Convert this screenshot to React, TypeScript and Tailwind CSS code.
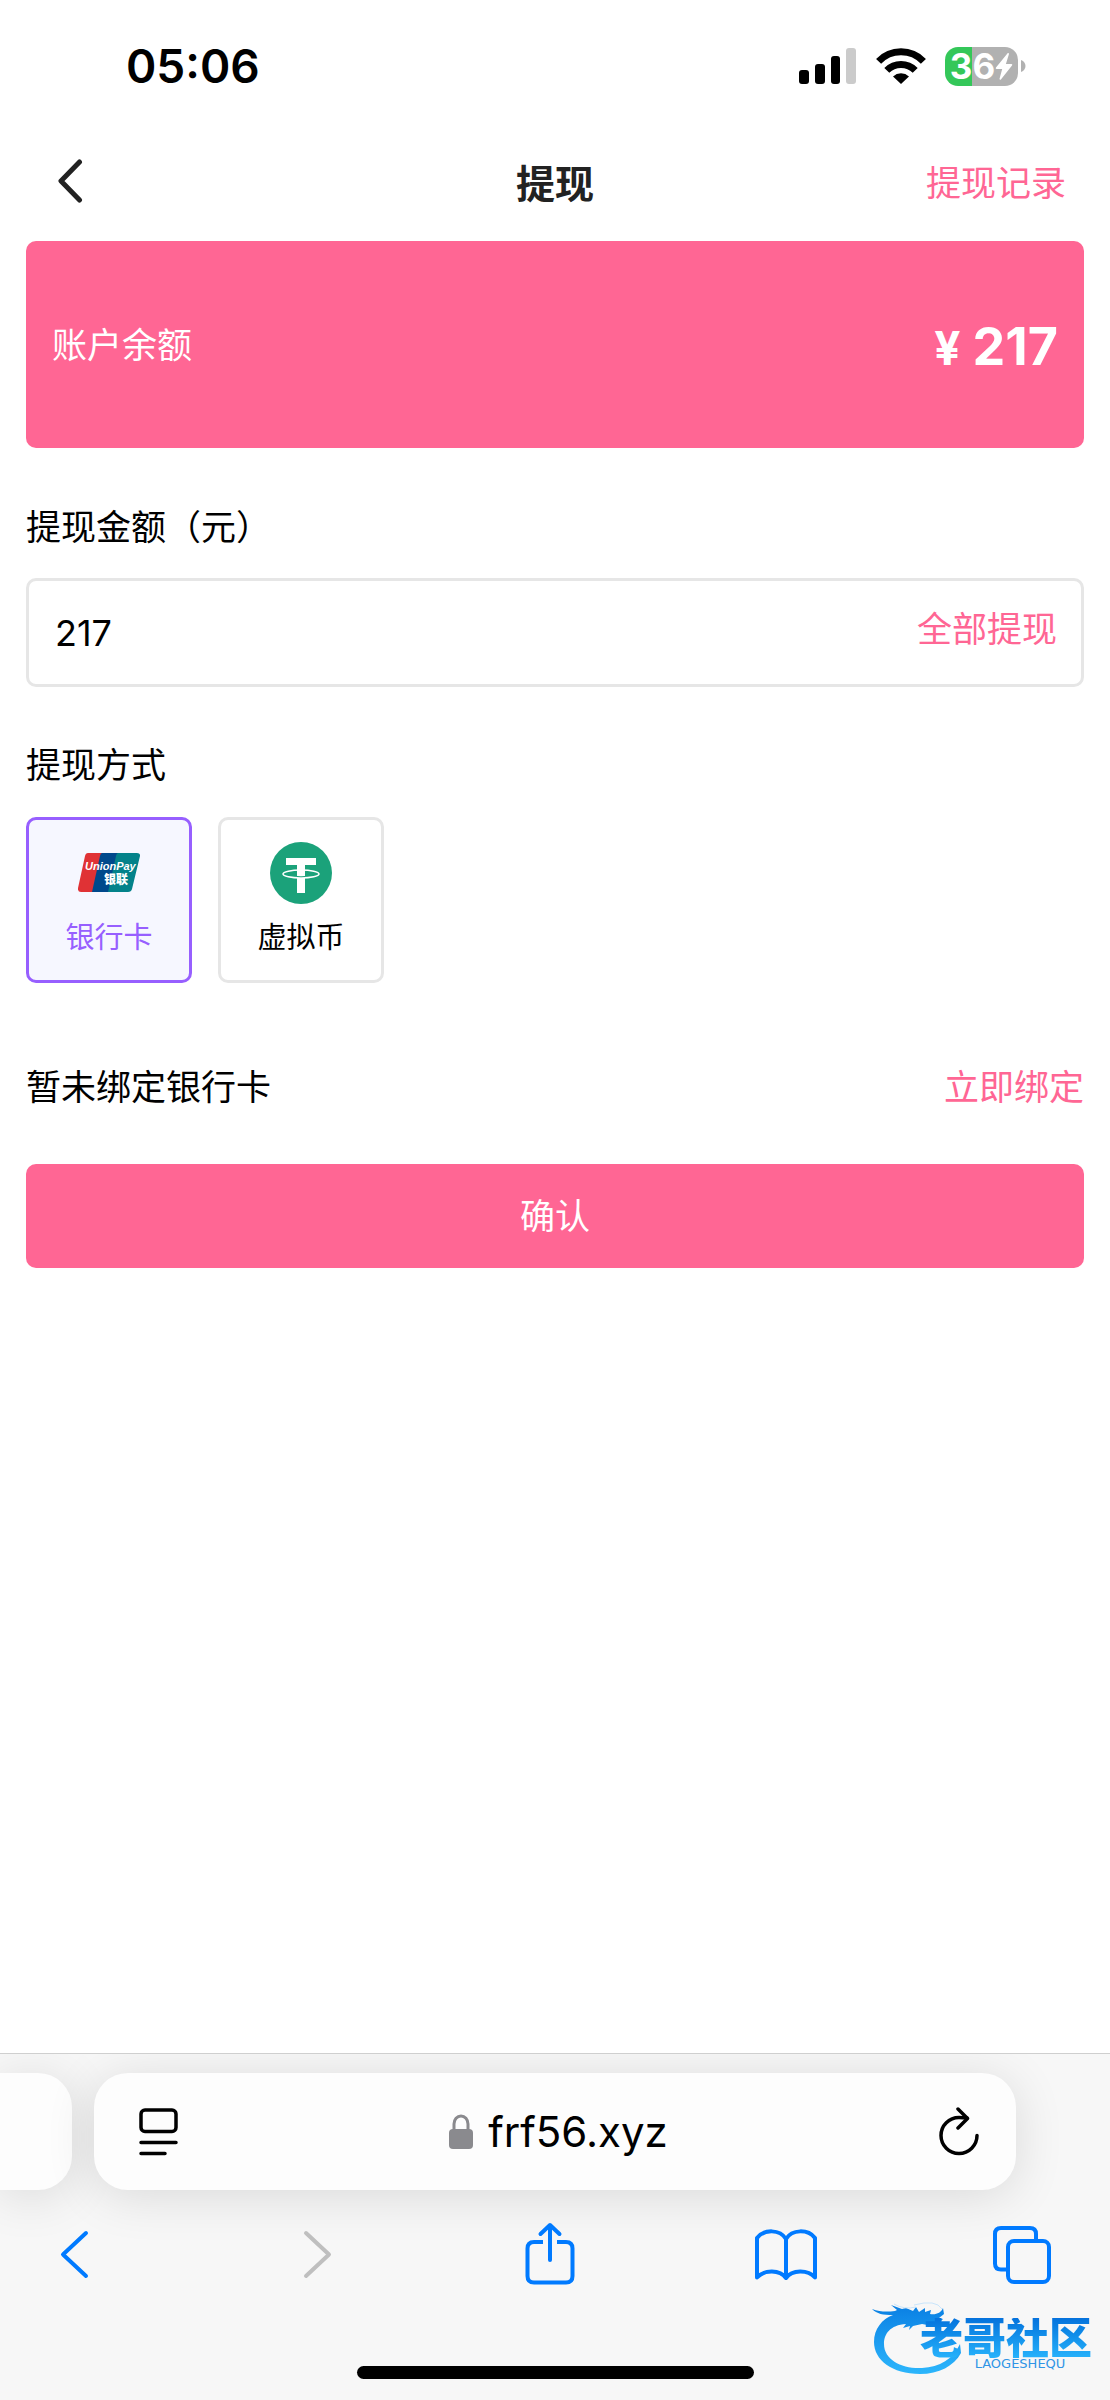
import { useState } from "react";
import type { ReactNode } from "react";
import clsx from "clsx";

type Method = "bank" | "usdt";

const BALANCE = "217";

const StatusBar = () => (
  <div className="flex h-[132px] items-center justify-between pl-[126px] pr-[84px]">
    <span className="text-[46px] leading-none font-semibold text-black">05:06</span>
    <div className="flex items-center">
      <svg width="58" height="36" viewBox="0 0 58 36" aria-hidden="true">
        <rect x="0" y="22" width="10" height="14" rx="3" />
        <rect x="16" y="16" width="10" height="20" rx="3" />
        <rect x="32" y="8" width="9" height="28" rx="3" />
        <rect x="47" y="0" width="10" height="36" rx="3" fill="#cbcbcb" />
      </svg>
      <svg className="ml-[19px]" width="50" height="36" viewBox="0 0 50 36" fill="none" stroke="#000" strokeWidth="7" aria-hidden="true">
        <path d="M2.6 13.4A31 31 0 0 1 47.4 13.4" />
        <path d="M10.8 22.4A20 20 0 0 1 39.2 22.4" />
        <path d="M25 36l-8-7.6a12 12 0 0 1 16 0z" fill="#000" stroke="none" />
      </svg>
      <div className="ml-[19px] flex h-[39px] w-[73px] items-center justify-center rounded-[13px] bg-[linear-gradient(90deg,#34c759_27px,#b1b1b1_27px)] text-white">
        <span className="text-[35px] leading-none font-bold">36</span>
        <svg width="18" height="27" viewBox="0 0 18 27" fill="currentColor" aria-hidden="true">
          <path d="M12.4.6 1 14.6c-.6.8-.2 1.500.7 1.500h5.500L4.6 25.6c-.3 1.100.8 1.500 1.500.6L17 12.500c.6-.8.2-1.500-.7-1.500h-5.400l3-9.800c.3-1.100-.8-1.500-1.500-.6z" />
        </svg>
      </div>
      <svg className="ml-[3px]" width="5" height="12" viewBox="0 0 5 12" fill="#b1b1b1" aria-hidden="true">
        <path d="M0 0c6 2 6 10 0 12z" />
      </svg>
    </div>
  </div>
);

const NavBar = () => (
  <header className="grid h-[102px] grid-cols-3 items-center px-[44px]">
    <button type="button" aria-label="返回" className="justify-self-start">
      <svg width="48" height="48" viewBox="0 0 48 48" fill="none" stroke="#222" strokeWidth="5" strokeLinecap="round" strokeLinejoin="round">
        <path d="M35.500 3 17 22l18.500 19" />
      </svg>
    </button>
    <h1 className="justify-self-center text-[39px] leading-none font-semibold text-[#222]">提现</h1>
    <a href="#records" className="justify-self-end text-[35px] leading-none text-[#ff6694]">
      提现记录
    </a>
  </header>
);

const UnionPayLogo = () => (
  <svg width="62" height="62" viewBox="0 0 62 62" aria-hidden="true">
    <path d="M10 11h16L16 50H3q-3.500 0-3-4L7 14q.7-3 3-3z" fill="#e03235" />
    <path d="M24 11h18L32 50H14l8-36q.7-3 2-3z" fill="#00498c" />
    <path d="M40 11h19q3.500 0 3 3l-8 33q-.7 3-4 3H30l8-36q.7-3 2-3z" fill="#03828a" />
    <text x="7" y="28" fontFamily="Liberation Sans" fontSize="11" fontWeight="700" fontStyle="italic" fill="#fff">
      UnionPay
    </text>
    <text x="26" y="42" fontFamily="Noto Sans CJK SC" fontSize="12" fontWeight="900" fill="#fff">
      银联
    </text>
  </svg>
);

const TetherLogo = () => (
  <svg width="62" height="62" viewBox="0 0 62 62" aria-hidden="true">
    <circle cx="31" cy="31" r="31" fill="#1ba27a" />
    <path d="M16 16h30v7H35v28h-8V23H16z" fill="#fff" />
    <ellipse cx="31" cy="32" rx="18" ry="4" fill="none" stroke="#fff" strokeWidth="1.500" />
    <path d="M27 34.500q4 .6 8 0" fill="none" stroke="#1ba27a" strokeWidth="1" />
  </svg>
);

interface MethodCardProps {
  label: string;
  active: boolean;
  onSelect: () => void;
  children: ReactNode;
}

const MethodCard = ({ label, active, onSelect, children }: MethodCardProps) => (
  <button
    type="button"
    aria-pressed={active}
    onClick={onSelect}
    className={clsx(
      "flex size-[166px] flex-col items-center justify-center gap-[18px] rounded-[10px] border-[3px] pb-1",
      active ? "border-[#975fff] bg-[#f6f7ff] text-[#975fff]" : "border-[#e6e6e6] bg-white text-black"
    )}
  >
    {children}
    <span className="text-[29px] leading-[32px]">{label}</span>
  </button>
);

const ToolbarButton = ({ label, className, children }: { label: string; className?: string; children: ReactNode }) => (
  <button type="button" aria-label={label} className={clsx("size-[84px]", className ?? "text-[#007aff]")}>
    <svg width="84" height="84" viewBox="0 0 84 84" fill="none" stroke="currentColor" strokeWidth="4" strokeLinecap="round" strokeLinejoin="round">
      {children}
    </svg>
  </button>
);

const Watermark = () => (
  <div className="absolute right-[18px] bottom-[30px]">
    <svg className="absolute right-[128px] -bottom-[10px]" width="94" height="80" viewBox="0 0 94 80" aria-hidden="true">
      <defs>
        <linearGradient id="dragon" x1="0" y1="0" x2="0" y2="1">
          <stop offset="0" stopColor="#0a7fe3" />
          <stop offset="1" stopColor="#2cb6fc" />
        </linearGradient>
      </defs>
      <path
        fill="url(#dragon)"
        d="M2 9c8 3 15 3 23 2l2-1-6-5 11 4 4-1 7 3 3-4 3 5 6-4v4l6-2-1 4c6 1 11-1 13-6l1 6-5 4 4 1-5 5-8-2 3 4-11-2-9 2-4 4 1-4-7 2 3-4C20 25 14 34 14 44c0 16 18 25 38 24 18-1 31-9 38-24l1 9c-7 13-22 21-41 21C22 74 4 60 4 42 4 29 12 19 23 15 13 15 7 14 2 9z"
      />
      <path d="M24 4q10 6 22 3M44 5q22-6 28 4" fill="none" stroke="#c9e5fb" strokeWidth="1" />
    </svg>
    <div className="relative flex flex-col items-center">
      <span className="bg-linear-to-b from-[#0672dc] to-[#27b2fb] bg-clip-text text-[43px] leading-[40px] font-black text-transparent">
        老哥社区
      </span>
      <span className="pl-[28px] font-['DejaVu_Sans'] text-[13px] leading-[12px] text-[#2f95e6]">LAOGESHEQU</span>
    </div>
  </div>
);

const BrowserBar = () => (
  <footer className="relative overflow-hidden border-t border-[#cfcfcf] bg-[#f7f7f7] pt-[19px] pb-[21px]">
    <div className="flex h-[117px] gap-[22px] pr-[94px]">
      <div className="w-[72px] rounded-r-[34px] bg-[#fdfdfd] shadow-[0_6px_50px_rgba(0,0,0,0.12)]" />
      <div className="flex flex-1 items-center justify-between rounded-[34px] bg-[#fdfdfd] pr-[36px] pl-[45px] shadow-[0_6px_50px_rgba(0,0,0,0.12)]">
        <button type="button" aria-label="页面菜单">
          <svg width="40" height="50" viewBox="0 0 40 50" fill="none" stroke="#000" strokeWidth="3.500" strokeLinecap="round">
            <rect x="2" y="3" width="35" height="21.500" rx="4" />
            <path d="M2 35.500h35M2 46.500h24" />
          </svg>
        </button>
        <a href="#address" className="flex items-center gap-[15px] text-[42px] leading-none text-black">
          <svg width="24" height="36" viewBox="0 0 24 36" aria-hidden="true">
            <path d="M5 17V10a7 8 0 0 1 14 0v7" fill="none" stroke="#8a8a8e" strokeWidth="3" />
            <rect x="0" y="15" width="24" height="20" rx="4" fill="#8a8a8e" />
          </svg>
          frf56.xyz
        </a>
        <button type="button" aria-label="刷新">
          <svg width="42" height="50" viewBox="0 0 42 50" fill="none" stroke="#000" strokeWidth="3.500" strokeLinecap="round" strokeLinejoin="round">
            <path d="M39 28.500A18 18 0 1 1 21 10.500q4 0 8 .5" />
            <path d="m20 2 9.500 9.500L20 21" />
          </svg>
        </button>
      </div>
    </div>
    <nav className="mt-[22px] flex justify-between pr-[46px] pl-[32px]">
      <ToolbarButton label="后退">
        <path d="M54 21 31 42.500 54 64" />
      </ToolbarButton>
      <ToolbarButton label="前进" className="text-[#bfbfbf]">
        <path d="M37 21l23 21.500L37 64" />
      </ToolbarButton>
      <ToolbarButton label="分享">
        <path d="M34.500 22 44 13l9.500 9M44 14v34" />
        <path strokeLinecap="butt" d="M37 30h-9q-6.500 0-6.500 6.500V64q0 6.500 6.500 6.500h32q6.500 0 6.500-6.500V36.500q0-6.500-6.500-6.500h-9" />
      </ToolbarButton>
      <ToolbarButton label="书签">
        <path d="M43 66V27C37 17 21 17 14 26v39.500C21 57.500 37 57.500 43 66zM43 27c6-10 22-10 29-1v39.500C65 57.500 49 57.500 43 66" />
      </ToolbarButton>
      <ToolbarButton label="标签页">
        <rect x="28" y="29" width="41" height="41" rx="6" />
        <path strokeLinecap="butt" d="M27 57.500h-6q-6 0-6-6V22q0-6 6-6h29q6 0 6 6v6" />
      </ToolbarButton>
    </nav>
    <div className="mx-auto mt-[70px] h-[13px] w-[397px] rounded-full bg-black" />
    <Watermark />
  </footer>
);

export default function App() {
  const [amount, setAmount] = useState(BALANCE);
  const [method, setMethod] = useState<Method>("bank");

  return (
    <div lang="zh-CN" className="flex min-h-screen flex-col bg-white font-['Inter','Noto_Sans_CJK_SC',sans-serif] text-black">
      <StatusBar />
      <NavBar />

      <main className="flex-1 px-[26px] pt-[7px] text-[35px] leading-[52px]">
        <section className="flex h-[207px] items-center justify-between rounded-[10px] bg-[#ff6694] px-[26px] text-white">
          <span>账户余额</span>
          <span className="flex items-baseline gap-[12px] pt-1 font-bold">
            <span className="text-[46px] leading-none">¥</span>
            <span className="text-[52px] leading-none">{BALANCE}</span>
          </span>
        </section>

        <label htmlFor="amount" className="mt-[53px] block">
          提现金额（元）
        </label>
        <div className="mt-[25px] flex h-[109px] items-center rounded-[10px] border-[3px] border-[#e6e6e6] pr-[24px] pl-[26px]">
          <input
            id="amount"
            type="text"
            inputMode="decimal"
            value={amount}
            onChange={(e) => setAmount(e.target.value)}
            className="min-w-0 flex-1 text-[36px] outline-none"
          />
          <button type="button" onClick={() => setAmount(BALANCE)} className="pb-2 text-[#ff6694]">
            全部提现
          </button>
        </div>

        <h2 className="mt-[52px]">提现方式</h2>
        <div className="mt-[26px] flex gap-[26px]">
          <MethodCard label="银行卡" active={method === "bank"} onSelect={() => setMethod("bank")}>
            <UnionPayLogo />
          </MethodCard>
          <MethodCard label="虚拟币" active={method === "usdt"} onSelect={() => setMethod("usdt")}>
            <TetherLogo />
          </MethodCard>
        </div>

        <div className="mt-[78px] flex items-center justify-between">
          <span>暂未绑定银行卡</span>
          <a href="#bind" className="text-[#ff6694]">
            立即绑定
          </a>
        </div>
        <button type="button" className="mt-[51px] h-[104px] w-full rounded-[10px] bg-[#ff6694] text-white">
          确认
        </button>
      </main>

      <BrowserBar />
    </div>
  );
}
